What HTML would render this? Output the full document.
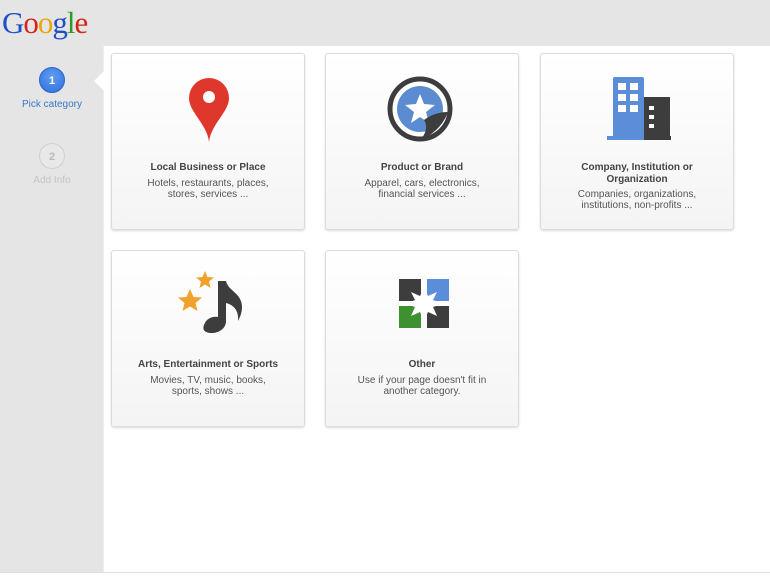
<!DOCTYPE html>
<html><head><style>
*{margin:0;padding:0;box-sizing:border-box}
body{width:770px;height:576px;background:#e5e5e5;font-family:"Liberation Sans",Arial,sans-serif;position:relative;overflow:hidden}
.logo{position:absolute;left:2px;top:5px;font-family:"Liberation Serif",serif;font-size:31px;letter-spacing:-1px}
.panel{position:absolute;left:103px;top:46px;width:667px;height:526px;background:#fff;border-left:1px solid #ededed}
.notch{position:absolute;left:94px;top:71px;width:0;height:0;border-top:10px solid transparent;border-bottom:10px solid transparent;border-right:10px solid #fff}
.bottom{position:absolute;left:0;top:572px;width:770px;height:4px;background:#fff;border-top:1px solid #ddd}
.step{position:absolute;width:26px;height:26px;border-radius:50%;text-align:center;line-height:26px;font-size:11px;font-weight:bold}
.s1{left:39px;top:67px;background:radial-gradient(circle at 50% 35%,#5f9cf0,#2f6fdc);color:#fff;border:1px solid #2d64c8}
.s2{left:39px;top:143px;background:#e8e8e8;color:#bbb;border:1px solid #d0d0d0}
.lab{position:absolute;width:104px;left:0;text-align:center;font-size:10px}
.card{position:absolute;width:194px;height:177px;border:1px solid #dcdcdc;border-radius:3px;background:linear-gradient(#fff,#f4f4f4);box-shadow:0 1px 2px rgba(0,0,0,.15);text-align:center;color:#555}
.card svg{position:absolute;left:0;top:0}
.t{position:absolute;left:0;right:0;top:108px;font-size:10px;font-weight:bold;color:#444;line-height:12px}
.d{position:absolute;left:0;right:0;top:124px;font-size:10px;line-height:11px}
</style></head><body>
<div class="logo"><span style="color:#1f4fc6">G</span><span style="color:#d2261b">o</span><span style="color:#eba60d">o</span><span style="color:#1f4fc6">g</span><span style="color:#2f9a2a">l</span><span style="color:#d2261b">e</span></div>
<div class="step s1">1</div>
<div class="lab" style="top:99px;color:#3a78c6">Pick category</div>
<div class="step s2">2</div>
<div class="lab" style="top:175px;color:#c4c4c4">Add Info</div>
<div class="panel"></div>
<div class="notch"></div>
<div class="bottom"></div>

<div class="card" style="left:111px;top:53px">
<svg width="194" height="100"><path d="M97 88 C95 70 77 58 77 44 A20 20 0 0 1 117 44 C117 58 99 70 97 88Z" fill="#e0372c"/><circle cx="97" cy="43" r="6" fill="#fff"/></svg>
<div class="t">Local Business or Place</div>
<div class="d">Hotels, restaurants, places,<br>stores, services ...</div></div>

<div class="card" style="left:325px;top:53px">
<svg width="194" height="100"><circle cx="94" cy="55" r="30" fill="#fff" stroke="#3d3d3d" stroke-width="5"/><circle cx="94" cy="55" r="23" fill="#5b8bd0"/><polygon points="94,40 98,50 109,51 100,58 103,69 94,63 85,69 88,58 79,51 90,50" fill="#fff"/><path d="M122 58 C116 74 104 82 94 86 C100 80 102 72 98 66 C106 60 114 58 122 58Z" fill="#3d3d3d"/></svg>
<div class="t">Product or Brand</div>
<div class="d">Apparel, cars, electronics,<br>financial services ...</div></div>

<div class="card" style="left:540px;top:53px">
<svg width="194" height="100"><rect x="72" y="23" width="31" height="63" rx="2" fill="#5b8dd8"/><rect x="66" y="82" width="37" height="4" fill="#5b8dd8"/><rect x="103" y="43" width="26" height="43" fill="#3d3d3d"/><rect x="103" y="82" width="27" height="4" fill="#3d3d3d"/><g fill="#fff"><rect x="77" y="29" width="8" height="7"/><rect x="89" y="29" width="8" height="7"/><rect x="77" y="40" width="8" height="7"/><rect x="89" y="40" width="8" height="7"/><rect x="77" y="51" width="8" height="7"/><rect x="89" y="51" width="8" height="7"/><rect x="108" y="52" width="5" height="4"/><rect x="108" y="61" width="5" height="4"/><rect x="108" y="70" width="5" height="4"/></g></svg>
<div class="t" style="top:108px">Company, Institution or<br>Organization</div>
<div class="d" style="top:135px">Companies, organizations,<br>institutions, non-profits ...</div></div>

<div class="card" style="left:111px;top:250px">
<svg width="194" height="100"><polygon points="93,20 95.5,26 102,26.5 97,30.5 98.5,37 93,33.5 87.5,37 89,30.5 84,26.5 90.5,26" fill="#f0a22c"/><polygon points="78,38 81.5,46 90,46.5 83.5,52 85.5,60 78,55.5 70.5,60 72.5,52 66,46.5 74.5,46" fill="#f0a22c"/><path d="M106 30 L114 30 C116 40 130 42 130 56 C130 62 128 66 126 70 C127 60 122 54 114 52 L114 70 C114 78 106 82 100 82 C93 82 90 79 92 74 C94 68 100 65 106 66Z" fill="#3d3d3d"/></svg>
<div class="t">Arts, Entertainment or Sports</div>
<div class="d">Movies, TV, music, books,<br>sports, shows ...</div></div>

<div class="card" style="left:325px;top:250px">
<svg width="194" height="100"><rect x="73" y="28" width="22" height="22" fill="#3d3d3d"/><rect x="101" y="28" width="22" height="22" fill="#5b8dd8"/><rect x="73" y="55" width="22" height="22" fill="#3e9130"/><rect x="101" y="55" width="22" height="22" fill="#3d3d3d"/><polygon points="98,37 102,45 111,41 107,49 116,53 107,56 111,65 102,61 98,70 94,61 85,65 89,56 80,53 89,49 85,41 94,45" fill="#fff"/></svg>
<div class="t">Other</div>
<div class="d">Use if your page doesn't fit in<br>another category.</div></div>
</body></html>
